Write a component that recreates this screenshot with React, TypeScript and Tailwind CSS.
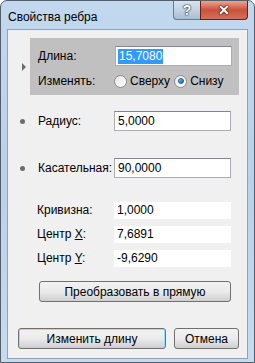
import { ReactNode } from 'react';

const font = { fontFamily: '"Liberation Sans", Arial, sans-serif' };

const Field = ({ value, selected }: { value: string; selected?: boolean }) => (
  <div className="w-[117px] h-[20px] bg-white border border-[#abadb3] border-t-[#7a8799] flex items-center pl-[2px]">
    {selected ? (
      <span className="bg-[#3399ff] text-white px-[1px] leading-[15px]">{value}</span>
    ) : (
      <span className="pl-[1px]">{value}</span>
    )}
  </div>
);

const ValueBox = ({ value }: { value: string }) => (
  <div className="w-[117px] h-[17px] bg-white flex items-center pl-[3px]">{value}</div>
);

const Row = ({ children, dot, label }: { children: ReactNode; dot?: boolean; label: ReactNode }) => (
  <div className="flex items-center h-[20px]">
    <div className="w-[22px] flex justify-center pl-[7px]">
      {dot && <div className="w-[5px] h-[5px] rounded-full bg-[#6d6d6d]" />}
    </div>
    <div className="w-[84px] pl-[8px] whitespace-nowrap">{label}</div>
    {children}
  </div>
);

const Radio = ({ checked }: { checked?: boolean }) => (
  <div className="w-[13px] h-[13px] rounded-full border border-[#8f8f8f] bg-gradient-to-br from-[#e6e6e6] to-[#ffffff] flex items-center justify-center">
    {checked && <div className="w-[6px] h-[6px] rounded-full bg-gradient-to-br from-[#8ad0f5] to-[#0f5a8c] border border-[#1d5f8f]" />}
  </div>
);

const Button = ({ children, className = '' }: { children: ReactNode; className?: string }) => (
  <div
    className={`h-[21px] rounded-[3px] border border-[#707070] bg-gradient-to-b from-[#f2f2f2] via-[#ebebeb] to-[#cfcfcf] flex items-center justify-center ${className}`}
  >
    {children}
  </div>
);

export default function App() {
  return (
    <div className="w-[255px] h-[363px] bg-white" style={font}>
      <div className="w-[255px] h-[363px] rounded-t-[7px] border border-[#555f6b] bg-gradient-to-b from-[#c2d8ef] via-[#b9d1ea] to-[#c7dbf0] flex flex-col text-[12px] text-black relative">
        <div className="h-[28px] flex items-start justify-between">
          <div className="pl-[7px] pt-[7px] text-[12px] text-black">Свойства ребра</div>
          <div className="flex mr-[6px]">
            <div className="w-[27px] h-[19px] rounded-bl-[4px] border border-[#6d7a8a] border-t-0 border-r-0 bg-gradient-to-b from-[#d7e3ef] via-[#c2d3e4] to-[#a9bdd3] flex items-center justify-center text-white font-bold text-[14px] [text-shadow:0_0_1px_#2a3a4e,0_0_1px_#2a3a4e,0_0_2px_#2a3a4e]">
              ?
            </div>
            <div className="w-[48px] h-[19px] rounded-br-[4px] border border-[#6b1d12] border-t-0 bg-gradient-to-b from-[#e8a493] via-[#c8523a] to-[#d4705a] flex items-center justify-center text-white font-bold text-[14px] [text-shadow:0_0_1px_#3a0a02,0_0_1px_#3a0a02,0_0_2px_#3a0a02]">
              ✕
            </div>
          </div>
        </div>
        <div className="mx-[6px] h-[330px] border border-[#8da3bc] bg-[#f0f0f0] flex flex-col">
          <div className="flex items-center mt-[8px]">
            <div className="w-[22px] flex justify-end pr-[4px]">
              <div className="w-0 h-0 border-y-[4px] border-y-transparent border-l-[4px] border-l-[#6d6d6d]" />
            </div>
            <div className="w-[209px] h-[57px] bg-[#c0c0c0] flex flex-col pt-[8px]">
              <div className="flex items-center h-[20px]">
                <div className="w-[85px] pl-[8px]">Длина:</div>
                <Field value="15,7080" selected />
              </div>
              <div className="flex items-center h-[14px] mt-[8px]">
                <div className="w-[84px] pl-[8px]">Изменять:</div>
                <Radio />
                <span className="ml-[3px]">Сверху</span>
                <div className="ml-[4px]">
                  <Radio checked />
                </div>
                <span className="ml-[3px]">Снизу</span>
              </div>
            </div>
          </div>
          <div className="mt-[16px]">
            <Row dot label="Радиус:">
              <Field value="5,0000" />
            </Row>
          </div>
          <div className="mt-[27px]">
            <Row dot label="Касательная:">
              <Field value="90,0000" />
            </Row>
          </div>
          <div className="mt-[23px] flex flex-col gap-[6px]">
            <div className="flex items-center">
              <div className="w-[106px] pl-[29px]">Кривизна:</div>
              <ValueBox value="1,0000" />
            </div>
            <div className="flex items-center">
              <div className="w-[106px] pl-[29px]">
                Центр <span className="underline">X</span>:
              </div>
              <ValueBox value="7,6891" />
            </div>
            <div className="flex items-center">
              <div className="w-[106px] pl-[29px]">
                Центр <span className="underline">Y</span>:
              </div>
              <ValueBox value="-9,6290" />
            </div>
          </div>
          <div className="mt-[14px] pl-[31px]">
            <Button className="w-[192px]">Преобразовать в прямую</Button>
          </div>
          <div className="mt-[26px] flex pl-[10px] gap-[8px]">
            <Button className="w-[148px] border-[#3c7fb1] shadow-[inset_0_0_0_1px_#8ee2fb] from-[#eaf6fd] via-[#d9f0fc] to-[#a7d9f5]">
              Изменить длину
            </Button>
            <Button className="w-[65px]">Отмена</Button>
          </div>
        </div>
      </div>
    </div>
  );
}
